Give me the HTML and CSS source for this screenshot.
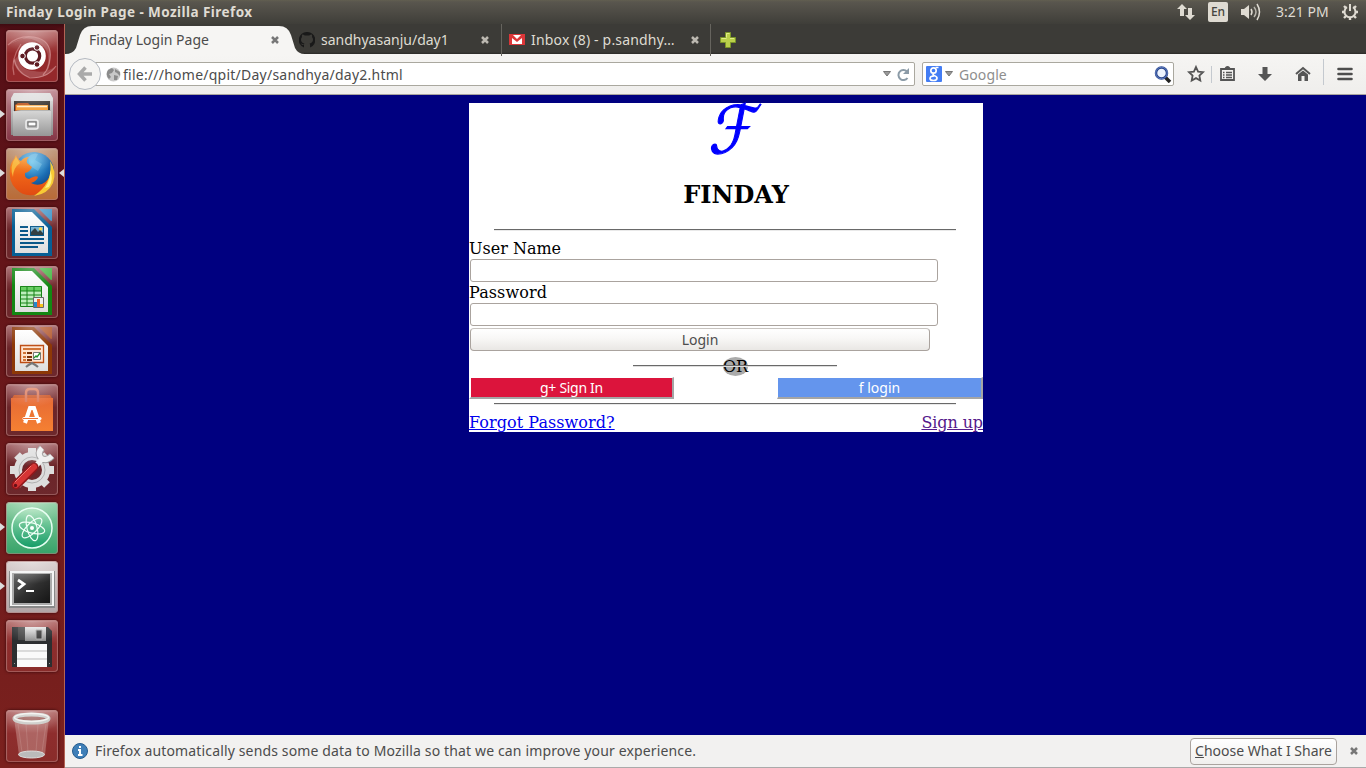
FILE: index.html
```html
<!DOCTYPE html>
<html lang="en">
<head>
<meta charset="utf-8">
<title>Finday Login Page</title>
<link rel="stylesheet" href="styles.css">
</head>
<body>
<svg class="defs" width="0" height="0">
  <defs>
    <linearGradient id="silver" x2="0" y2="1"><stop stop-color="#e4e4e4"/><stop offset="1" stop-color="#8a8a8a"/></linearGradient>
    <linearGradient id="paper" x2="0" y2="1"><stop stop-color="#fff"/><stop offset="1" stop-color="#dedede"/></linearGradient>
    <linearGradient id="flame" x2="0" y2="1"><stop stop-color="#f8a030"/><stop offset=".5" stop-color="#ef6418"/><stop offset="1" stop-color="#e04b12"/></linearGradient>
    <radialGradient id="globe" cx=".45" cy=".25" r=".8"><stop stop-color="#69c8f0"/><stop offset=".55" stop-color="#1b6db3"/><stop offset="1" stop-color="#0b2f6b"/></radialGradient>
    <linearGradient id="green" x2="0" y2="1"><stop stop-color="#a4dfb4"/><stop offset="1" stop-color="#159c67"/></linearGradient>
    <linearGradient id="bag" x2="0" y2="1"><stop stop-color="#e66a35"/><stop offset="1" stop-color="#f58032"/></linearGradient>
    <linearGradient id="screen" x2="1" y2="1"><stop stop-color="#666"/><stop offset=".5" stop-color="#303030"/><stop offset="1" stop-color="#151515"/></linearGradient>
  </defs>
</svg>
<header class="panel">
  <span class="title">Finday Login Page - Mozilla Firefox</span>
  <div class="indicators">
    <svg class="updown" width="18" height="18" viewBox="0 0 18 18"><path fill="#dfdbd2" d="M5 1l5 5H7v7H3V6H0zM11 5h4v7h3l-5 5-5-5h3z"/></svg>
    <span class="lang">En</span>
    <svg class="sound" width="21" height="18" viewBox="0 0 21 18"><path fill="#dfdbd2" d="M1 6h3l5-4v14l-5-4H1z"/><g fill="none" stroke="#dfdbd2" stroke-width="1.500"><path d="M11 6q2 3 0 6"/><path d="M14 4q4 5 0 10" stroke="#b9b6ad"/><path d="M17 1q5 8 0 16"/></g></svg>
    <span class="clock">3:21 PM</span>
    <svg class="cog" width="18" height="18" viewBox="0 0 18 18"><g fill="none" stroke="#dfdbd2" stroke-width="2"><path d="M6 4.200a5.500 5.500 0 1 0 6 0"/><path d="M9 1v7"/><path stroke-width="2.400" d="M1 9h3M14 9h3M3 3l2 2M15 3l-2 2M3 15l2-2M15 15l-2-2M9 14v3"/></g></svg>
  </div>
</header>
<div class="desktop">
  <nav class="launcher">
    <div class="tile ubuntu"><svg viewBox="0 0 52 52"><g fill="none" stroke="#e7a5a5" stroke-opacity=".5" stroke-width="1.200"><path d="M2 15Q12 5 28 7Q46 10 44 28Q43 39 37 45M8 45Q4 30 15 14M50 36Q42 48 24 48Q10 42 8 28"/></g><path fill="#fff" fill-opacity=".16" d="M2 15Q24 1 38 17Q47 28 37 47Q44 42 45 25Q44 6 20 7zM7 31Q13 49 31 48Q43 47 50 36Q39 44 28 41Q14 41 12 26z"/><circle cx="26" cy="26" r="13.800" fill="#fff"/><circle cx="26.500" cy="26" r="7.200" fill="none" stroke="#5e1b22" stroke-width="3.200"/><g fill="#5e1b22" stroke="#fff"><circle cx="16.500" cy="26" r="2.800"/><circle cx="31" cy="17.500" r="2.800"/><circle cx="31" cy="34.500" r="2.800"/></g></svg></div>
    <div class="tile files"><i class="run"></i><svg viewBox="0 0 52 52"><path fill="url(#silver)" d="M8 4h36l3 5v37H5V9z"/><path fill="#ddd" d="M8 4h36l3 8H5z"/><path fill="#383430" d="M8 12h36v12H8z"/><path fill="#bd551e" d="M9 16l3-2h10l2 2h18v7H9z"/><path fill="#f6a13b" d="M10 16h32v5H10z"/><path stroke="#ffeecb" stroke-width="1.500" d="M11 17.500h30"/><path fill="#b5b5b4" d="M7 23q4-2 8-2h30v26H7z"/><path fill="url(#silver)" opacity=".7" d="M7 22h38v25H7z"/><rect x="20" y="31" width="12" height="9" rx="2" fill="#b8b8b8" stroke="#eee" stroke-width="1.500"/><rect x="22" y="33" width="8" height="4" fill="#fff" stroke="#666"/></svg></div>
    <div class="tile firefox"><i class="run"></i><i class="focus"></i><svg viewBox="0 0 52 52"><circle cx="28" cy="24" r="20" fill="url(#globe)"/><path fill="#87c9e8" opacity=".45" d="M22 9q5-5 10-3l-3 6 7 4-4 7-8-5z"/><path fill="url(#flame)" d="M10 7q1 4 5 6 3-4 8-4-3 3-2 6l5 4q-2 5-7 6-1 5 4 6 7-4 9-2-1 4-7 6 5 3 11 1 8-4 10-14 2 18-15 24-12 4-21-5Q2 33 4 20q1-6 4-9z"/><path fill="#f8ca34" d="M33 44q14-12 11-31 7 10 3 22-5 11-19 13z"/><path fill="#fff183" d="M39 40q6-9 5-18 4 10-1 17z"/><path fill="#f9b63b" d="M10 9l4 6q-7 5-7 14Q3 18 10 9z"/></svg></div>
    <div class="tile doc writer"><svg viewBox="0 0 52 52"><path fill="#075f95" d="M6 2h22l18 18v29H6z"/><path fill="#3e94c8" d="M33 2h13v12q-2 0-3-2l-8-8z"/><path fill="url(#paper)" d="M9 5h17l16 16v25H9z"/><g fill="#095889"><path d="M14 19h8v2h-8zM14 23h8v2h-8zM14 27h8v2h-8zM14 31h24v2H14zM14 35h24v2H14zM14 39h18v2H14z"/><path d="M24 19h14v10H24z"/></g><path fill="#79b3d0" d="M25 20h12v8H25z"/><circle cx="34.500" cy="22" r="1.800" fill="#ffdb48"/><path fill="#333f42" d="M25 28v-3l4-4 3 4 2-2 3 3v2z"/></svg></div>
    <div class="tile doc calc"><svg viewBox="0 0 52 52"><path fill="#138713" d="M6 2h22l18 18v29H6z"/><path fill="#47b844" d="M33 2h13v12q-2 0-3-2l-8-8z"/><path fill="url(#paper)" d="M9 5h17l16 16v25H9z"/><path fill="#bdeebb" d="M14 20h22v21H14z"/><path fill="#67ce61" d="M14 20h22v5H14z"/><path fill="none" stroke="#168316" d="M14.500 20.500h21v20h-21zM14 25h22M14 29h22M14 33h22M14 37h22M21 20v21M28 20v21"/><path fill="#eee" stroke="#666" d="M27.500 31.500h10v10h-10z"/><path fill="#2388cd" d="M28 36h3v5h-3z"/><path fill="#ef6525" d="M31 33h3v8h-3z"/><path fill="#f6c41c" d="M34 38h3v3h-3z"/></svg></div>
    <div class="tile doc impress"><svg viewBox="0 0 52 52"><path fill="#8d3807" d="M6 2h22l18 18v29H6z"/><path fill="#b45a2f" d="M33 2h13v12q-2 0-3-2l-8-8z"/><path fill="url(#paper)" d="M9 5h17l16 16v25H9z"/><path fill="#ffe4d1" stroke="#bd4b13" stroke-width="1.300" d="M14.500 20.500h23v17h-23z"/><path fill="#d17437" d="M17 23h18v2H17zM17 27h3v2h-3zM17 31h3v2h-3zM17 34h3v2h-3z"/><path fill="#7a310a" d="M21 27h5v2h-5zM21 31h5v2h-5zM21 34h5v2h-5z"/><path fill="#fff" stroke="#777" d="M27.500 27.500h7v7h-7z"/><path fill="none" stroke="#24922a" stroke-width="1.300" d="M28 33l2-2 1 1 3-4"/><path stroke="#777" fill="none" stroke-width="2" d="M20 42q2-2 6-4 4 2 6 4"/></svg></div>
    <div class="tile software"><svg viewBox="0 0 52 52"><path fill="#ce5a2b" d="M8 11h36l3 5H5z"/><path fill="url(#bag)" d="M5 14h42v33H5z"/><path fill="none" stroke="#dc7959" stroke-width="2.500" d="M20 18V9q0-4 4-4h4q4 0 4 4v9"/><g fill="none" stroke="#fff"><path stroke-width="4" d="M19 39l5-15h4l5 15"/><path stroke-width="3" stroke-linecap="round" d="M18 34.500h16"/></g><path fill="#ed7137" d="M17 34h15v1H17z"/></svg></div>
    <div class="tile settings"><svg viewBox="0 0 52 52"><g fill="none" stroke="#ddd"><circle cx="26" cy="27" r="14" stroke-width="8"/><path stroke-width="8" d="M26 5v7M26 42v6M4 27h7M41 27h7M11 12l5 5M36 37l5 5M11 42l5-5M36 17l5-5"/></g><circle cx="26" cy="27" r="13" fill="none" stroke="#b0b0b0"/><path fill="none" stroke="#999" stroke-width="7" d="M36 5q-5 5-1 10 5 4 11-2"/><path fill="none" stroke="#eee" stroke-width="5" d="M36 5q-5 5-1 10 5 4 11-2M27 26l9-10"/><path stroke="#91171b" stroke-width="9" stroke-linecap="round" d="M10 42l18-18"/><path stroke="#d63434" stroke-width="6" stroke-linecap="round" d="M10 42l18-18"/><path stroke="#ef7a72" stroke-linecap="round" d="M9 39l16-16"/><circle cx="9.500" cy="42.500" r="1.700" fill="#671016"/></svg></div>
    <div class="tile atom"><i class="run"></i><svg viewBox="0 0 52 52"><circle cx="26" cy="26" r="20" fill="url(#green)" stroke="#e4fff1" stroke-width="1.500"/><g fill="none" stroke="#effff6" stroke-width="1.200"><ellipse cx="26" cy="26" rx="13" ry="5" transform="rotate(15 26 26)"/><ellipse cx="26" cy="26" rx="13" ry="5" transform="rotate(75 26 26)"/><ellipse cx="26" cy="26" rx="13" ry="5" transform="rotate(-45 26 26)"/></g><circle cx="26" cy="26" r="2" fill="#fff"/></svg></div>
    <div class="tile terminal"><i class="run"></i><svg viewBox="0 0 52 52"><path fill="#888" d="M3 10h46v37H3z"/><path fill="#f4f4f4" d="M4 10h44v35H4z"/><path fill="#aaa" d="M6 12h40v32H6z"/><path fill="url(#screen)" d="M8 13h36v29H8z"/><g fill="none" stroke="#fff"><path stroke-width="2.800" d="M12 19l6 4-6 5"/><path stroke-width="2" d="M20 30h8"/></g></svg></div>
    <div class="tile floppy"><svg viewBox="0 0 52 52"><path fill="#2c2e30" d="M6 7h36l4 4v36H6z"/><path fill="#444" d="M12 7h7v13h-7z"/><path fill="url(#silver)" d="M19 7h21v14H19z"/><path fill="#333" stroke="#aaa" d="M30 10h6v9h-6z"/><path fill="#fafafa" d="M11 24h30v23H11z"/><path stroke="#bbb" d="M11 31h30M11 39h30"/><path fill="#999" d="M8 43h1v1H8zM43 43h1v1h-1z"/></svg></div>
    <div class="tile trash"><svg viewBox="0 0 52 52"><path fill="#dbb4ae" fill-opacity=".4" d="M8 8h35l-4 37q-13 6-26 0z"/><g stroke="#ead0cb" stroke-opacity=".18"><path d="M12 14l4 28M20 14l2 28M32 14l-2 28M40 14l-4 28"/></g><ellipse cx="25.500" cy="44.500" rx="13" ry="3.500" fill="#bbb" stroke="#ddd"/><ellipse cx="25.500" cy="8.500" rx="17" ry="4" fill="#9a5b56" stroke="#c9c9c5" stroke-width="4"/><ellipse cx="25.500" cy="7.500" rx="17" ry="4" fill="none" stroke="#efefeb" stroke-width="1.500"/></svg></div>
  </nav>
  <main class="browser">
    <div class="tabs">
      <svg class="tabshape" width="240" height="30" viewBox="0 0 240 30"><path fill="#f6f5f3" d="M0 30q8 0 11-6l4-13q3-9 12-9h187q9 0 12 9l4 13q3 6 10 6z"/></svg>
      <div class="tab active"><span>Finday Login Page</span><svg class="close" width="8" height="8" viewBox="0 0 8 8"><path d="M1 1l6 6M7 1L1 7"/></svg></div>
      <div class="tab second"><svg class="fav" width="16" height="16" viewBox="0 0 16 16"><path fill="#191919" d="M8 0a8 8 0 0 0-3 15.500V13c-2 .4-2.600-.7-3-1.500 1.400 0 1.600 1.200 3 .9l.4-1C3 11 2 9.500 2 7.500q0-1.500 1-2.600-.4-1.400.3-2.300 1.300 0 2.500 1h4.400q1.200-1 2.500-1 .7.900.3 2.300 1 1.100 1 2.600c0 2-1 3.500-3.400 3.900q.5.500.5 1.500v2.600A8 8 0 0 0 8 0"/></svg><span>sandhyasanju/day1</span><svg class="close" width="8" height="8" viewBox="0 0 8 8"><path d="M1 1l6 6M7 1L1 7"/></svg></div>
      <div class="tab third"><svg class="fav" width="16" height="12" viewBox="0 0 16 12"><path fill="#fff" d="M0 0h16v11H0z"/><path fill="#dc3638" d="M0 0h3l5 5 5-5h3v11h-3V4L8 8 3 4v7H0z"/><path fill="none" stroke="#dc3638" d="M1 .5h14M1 10.500h14"/></svg><span class="inbox">Inbox (8) - p.sandhy…</span><svg class="close" width="8" height="8" viewBox="0 0 8 8"><path d="M1 1l6 6M7 1L1 7"/></svg></div>
      <svg class="plus" width="16" height="16" viewBox="0 0 16 16"><path fill="#bad04a" stroke="#7b9628" d="M5.500.5h5v5h5v5h-5v5h-5v-5h-5v-5h5z"/><path stroke="#e1ed88" fill="none" d="M6.500 5.500v-4h3M1.500 6.500h5M10 6.500h4"/></svg>
    </div>
    <div class="nav">
      <div class="address">
        <span class="back"><svg width="16" height="16" viewBox="0 0 16 16"><path fill="none" stroke="#aaa" stroke-width="3.500" d="M15 8H3M8.500 1.500L2.500 8l6 6.500"/></svg></span>
        <svg class="world" width="15" height="15" viewBox="0 0 15 15"><circle cx="7.500" cy="7.500" r="7" fill="#c9c9c9"/><path fill="#8b8b8b" d="M2 3l4-2 2 2-2 3-3 1 2 3-2 2Q-1 8 2 3M9 2l5 3v4l-3-3-2-1zM8 8l4 1-1 4-3 0z"/></svg>
        <span class="url">file:///home/qpit/Day/sandhya/day2.html</span>
        <svg class="drop" width="8" height="6" viewBox="0 0 8 6"><path fill="#999" stroke="#777" d="M.5.5h7L4 5z"/></svg>
        <svg class="reload" width="13" height="13" viewBox="0 0 13 13"><path fill="none" stroke="#8b9ba7" stroke-width="2" d="M10 3.500A5 5 0 1 0 10.500 10"/><path fill="#8b9ba7" d="M12 0v6H6z"/></svg>
      </div>
      <div class="search">
        <svg class="g" width="16" height="16" viewBox="0 0 16 16"><rect width="16" height="16" rx="1" fill="#437df4"/><g fill="none" stroke="#fff" stroke-width="1.700"><circle cx="7.500" cy="4.500" r="2.700"/><path d="M9.500 1.500h3M8 7.500q-2 1 0 2 3 1 3 2.500 0 2.500-3.500 2.500T4 12.500Q4 10 8 10"/></g></svg>
        <svg class="drop" width="8" height="6" viewBox="0 0 8 6"><path fill="#999" stroke="#777" d="M.5.5h7L4 5z"/></svg>
        <span class="google">Google</span>
        <svg class="mag" width="18" height="17" viewBox="0 0 18 17"><path stroke="#222" stroke-width="3.500" d="M11 11l5 5"/><circle cx="7.500" cy="7" r="5.500" fill="#edf4ff" stroke="#29458b" stroke-width="2.500"/><circle cx="7.500" cy="7" r="5.800" fill="none" stroke="#718fd0" stroke-width=".8"/></svg>
      </div>
      <svg class="tools" width="192" height="40" viewBox="0 0 192 40"><g fill="none" stroke="#555"><path stroke-width="1.800" d="M22 13l2.100 4.600 4.900.6-3.600 3.400.9 5-4.300-2.500-4.300 2.500.9-5-3.600-3.400 4.900-.6z"/><path stroke-width="1.800" d="M47 15h13v11H47z"/><path stroke-width="1.300" d="M49 18.500h1.500M52 18.500h6M49 21h1.500M52 21h6M49 23.500h1.500M52 23.500h6"/></g><path fill="#555" d="M50 16q1-4 3.500-4t3.500 4z"/><path stroke="#c4c9cf" d="M37.500 12v17M149.500 5v26"/><path fill="#555" d="M88.500 13h5v7h4.500L91 27l-7-7h4.500z"/><path fill="none" stroke="#555" stroke-width="2" d="M122 20l7-6 7 6"/><path fill="#555" d="M124 20.500l5-4 5 4V27h-3.500v-5h-3v5H124z"/><path stroke="#4d4d4d" stroke-linecap="round" stroke-width="2.600" d="M164.500 15h13M164.500 20h13M164.500 25h13"/></svg>
    </div>
    <section class="page">
      <form class="card" onsubmit="return false">
        <div class="logo"><span>ℱ</span></div>
        <h2>FINDAY</h2>
        <div class="rule"></div>
        <label class="name" for="user">User Name</label>
        <input id="user" type="text">
        <label class="pass" for="pw">Password</label>
        <input id="pw" type="password">
        <button class="login">Login</button>
        <div class="or"><span>OR</span></div>
        <div class="social"><button class="gp">g+ Sign In</button><button class="fb">f login</button></div>
        <div class="rule low"></div>
        <div class="links"><a href="#forgot">Forgot Password?</a><a class="visited" href="#signup">Sign up</a></div>
      </form>
    </section>
    <footer class="notice">
      <svg width="16" height="16" viewBox="0 0 16 16"><circle cx="8" cy="8" r="7.500" fill="#3f7fb8" stroke="#245b8e"/><path stroke="#fff" stroke-width="2" fill="none" d="M8 3v2M6 7h2v5M6 12h4.500"/></svg>
      <span class="message">Firefox automatically sends some data to Mozilla so that we can improve your experience.</span>
      <button class="choose"><u>C</u>hoose What I Share</button>
      <svg class="close" width="8" height="8" viewBox="0 0 8 8"><path d="M1 1l6 6M7 1L1 7"/></svg>
    </footer>
  </main>
</div>
</body>
</html>
```

FILE: styles.css
```css
*{box-sizing:border-box}
body{margin:0;width:1366px;height:768px;overflow:hidden;font:14px/20px "Noto Sans",sans-serif;color:#4c4c4c;white-space:nowrap}
svg{display:block;flex:none}
.defs{position:absolute}
button{font:inherit;padding:0;margin:0}
.panel{height:24px;display:flex;justify-content:space-between;align-items:center;padding:0 7px 0 6px;background:linear-gradient(#625f50 0,#59564e 2px,#3f3e39);color:#dfdbd2}
.title{font-weight:700;font-size:13.5px;letter-spacing:.44px}
.indicators{display:flex;align-items:center}
.lang{width:20px;height:20px;margin-left:13px;border-radius:2px;background:#dfdbd2;color:#454540;text-align:center;font-size:12px;line-height:20px;font-weight:500}
.sound{margin-left:12px}.clock{margin-left:15px;width:54px}.cog{margin-left:11px}
.desktop{display:flex;height:744px}
.launcher{width:65px;padding:6px 0 0 6px;background:linear-gradient(90deg,transparent 64px,#b36355 64px),linear-gradient(#3f0a10 0,#540f16 5px,#641519 240px,#7b211e);display:flex;flex-direction:column;gap:7px}
.tile{position:relative;width:52px;height:52px;flex:none;border-radius:4px;background:linear-gradient(#a36266,#6b2529 45%,#6d282c);box-shadow:inset 0 0 0 1px #b57e7c88,inset 0 1px 2px #ffffff60,0 0 3px #30060a}
.tile::after{content:"";position:absolute;inset:1px;border-radius:3px;background:radial-gradient(ellipse 34px 22px at 50% 0,#ffffff55,#ffffff00)}
.tile svg{width:52px;height:52px}
.tile.ubuntu{background:linear-gradient(#b86c6b,#942a2b 45%,#94282b)}
.tile.files{background:linear-gradient(#bc848d,#843545)}
.tile.firefox{background:linear-gradient(#ba8f70,#b96b37)}
.tile.atom{background:linear-gradient(#8acda0,#37a369)}
.tile.terminal{background:linear-gradient(#d6cccb,#b1a5a6)}
.trash{margin-top:31px}
.tile.floppy,.tile.trash{background:linear-gradient(#b36b6a,#8e2d2d 45%,#892c2a)}
.run{position:absolute;left:-6px;top:21px;border:4px solid transparent;border-left:5px solid #ddd;border-right:0}
.focus{position:absolute;right:-6px;top:21px;border:4px solid transparent;border-right:5px solid #ddd;border-left:0}
.browser{width:1301px;display:flex;flex-direction:column}
.tabs{height:30px;position:relative;display:flex;background:linear-gradient(#3c3b37 28px,#2b2a27)}
.tabshape{position:absolute;left:0;top:0}
.tab{position:relative;display:flex;align-items:center;height:32px;color:#dfdbd2}
.tab .close{margin-left:auto}
.active{width:227px;padding:0 13px 0 24px;color:#4c4c4c}
.second{width:209px;padding:0 12px 0 7px}
.third{width:210px;padding:0 11px 0 7px;border-left:1px solid #66645e;border-right:1px solid #66645e}
.inbox{letter-spacing:.18px}
.fav{margin-right:6px}
.close path{stroke:#bdb9b1;stroke-width:2.5}
.active .close path,.notice .close path{stroke:#777}
.plus{margin:8px 0 0 9px}
.nav{height:41px;display:flex;align-items:center;background:linear-gradient(#f6f5f3,#efeeec);border-bottom:1px solid #a9a49f}
.address{position:relative;height:24px;width:833px;margin-left:17px;padding:0 4px 0 23px;display:flex;align-items:center;background:#fff;border:1px solid #aaa89f;border-radius:2px}
.back{position:absolute;left:-14px;top:-5px;width:32px;height:32px;border:1px solid #b4b9c1;border-radius:50%;background:#f5f4f2;display:grid;place-items:center}
.world{margin-right:2px}
.url{margin-right:auto;padding-top:1px;letter-spacing:.24px}
.reload{margin-left:6px}
.search{width:252px;height:24px;margin-left:7px;display:flex;align-items:center;border:1px solid #aaa89f;border-radius:2px;background:#fff;padding:0 1px 0 3px}
.search .drop{margin:0 6px 0 3px}
.google{color:#8e8e8e;margin-right:auto;padding-top:1px;letter-spacing:.1px}
.page{height:640px;padding:8px 0 0 404px;background:#000080}
.card{width:514px;height:329px;background:#fff;color:#000;font:16px/19px "DejaVu Serif",serif;display:flex;flex-direction:column}
.logo{height:53px;padding-left:241px;color:#00f;font:66px/53px "DejaVu Sans",sans-serif;flex:none}
.logo span{display:block;width:51px;transform:translate(-1px,1px) skewX(-11deg) scaleX(.87);-webkit-text-stroke:1.2px #00f}
h2{margin:0;height:73px;padding:25px 0 0 20px;text-align:center;font-size:24px;line-height:28px}
.rule{width:462px;height:2px;margin-left:25px;background:linear-gradient(#696969 1px,#e9e9e9 1px);flex:none}
.name{height:28px;padding-top:8px}
.pass{height:21px;padding-top:1px;letter-spacing:.1px}
input{height:23px;width:468px;margin:0 0 0 1px;padding:2px 4px;border:1px solid #aaa39e;border-radius:3px;outline:0;background:#fff}
.login{width:460px;height:23px;margin:2px 0 0 1px;border:1px solid #aaa39e;border-top-color:#c8c4c0;border-radius:4px;background:linear-gradient(#fff,#f8f7f6 45%,#e9e7e4);color:#4c4c4c;font:14px/20px "Noto Sans",sans-serif}
.or{height:26px;position:relative;padding:6px 0 0 254px}
.or span{display:block;width:25px;height:19px;border-radius:50%;background:#aaa}
.or::after{content:"";position:absolute;left:164px;top:14px;width:204px;height:2px;background:linear-gradient(#696969 1px,#ddd 1px)}
.social{display:flex;justify-content:space-between;height:22px}
.social button{height:22px;border:solid;border-width:1px 2px 2px;border-color:#fff #a5a5a5 #a5a5a5 #fff;color:#fff;font:14px/18px "Noto Sans",sans-serif}
.social .gp{width:205px;background:#dc143c;letter-spacing:-.3px}
.social .fb{width:206px;background:#6495ed;border-left-width:1px}
.low{margin-top:4px}
.links{display:flex;justify-content:space-between;margin-top:8px}
.links a{color:#00e;letter-spacing:.06px}
.links .visited{color:#551a8b;letter-spacing:-.1px}
.notice{height:33px;display:flex;align-items:center;padding:0 8px 0 7px;background:#f2f1f0;border-bottom:1px solid #aaa}
.message{margin:0 auto 0 7px;letter-spacing:.145px}
.choose{width:147px;height:27px;border:1px solid #aaa39e;border-radius:4px;background:linear-gradient(#fff,#f0efed);color:#4c4c4c}
.notice .close{margin-left:13px}
```
